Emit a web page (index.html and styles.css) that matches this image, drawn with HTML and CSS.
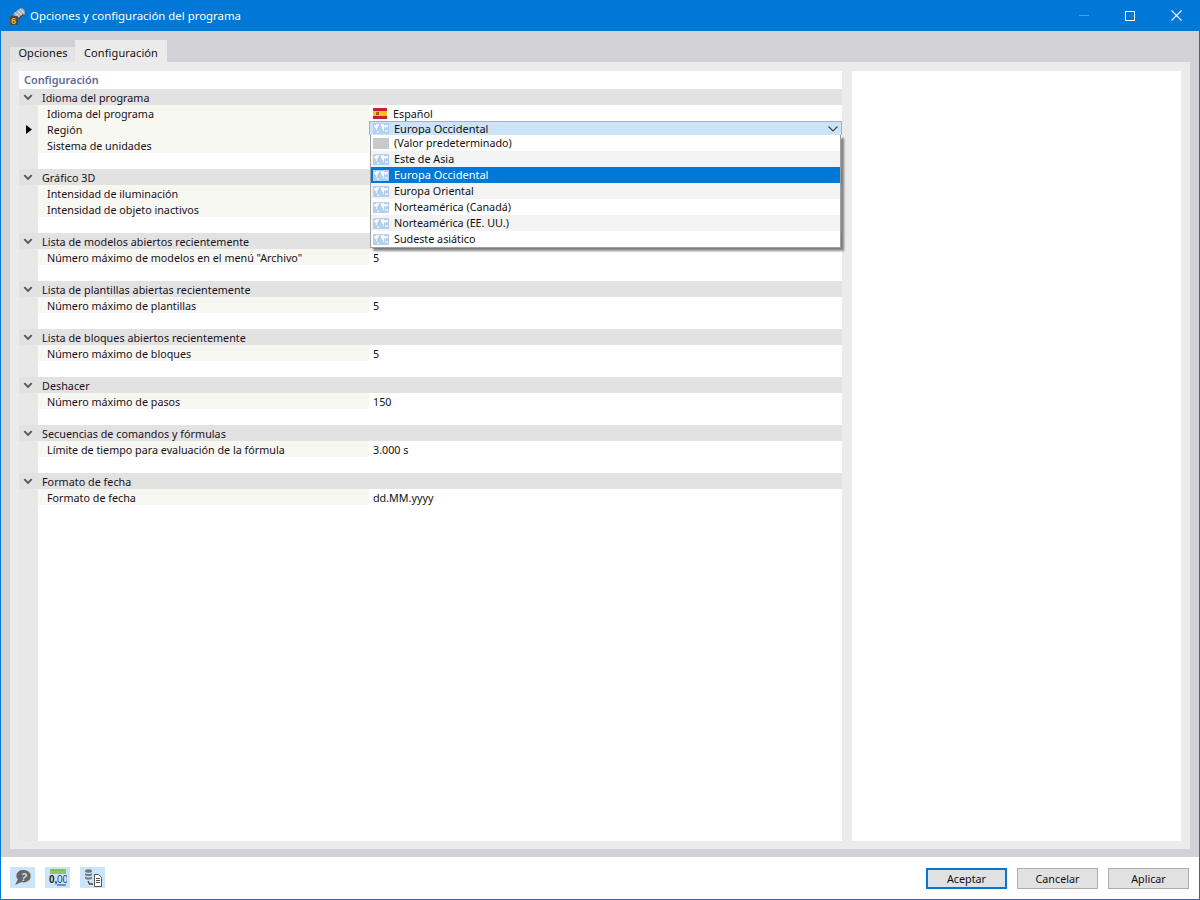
FILE: index.html
```html
<!DOCTYPE html>
<html lang="es">
<head>
<meta charset="utf-8">
<title>Opciones y configuración del programa</title>
<link rel="stylesheet" href="styles.css">
</head>
<body>
<svg class="defs" width="0" height="0">
  <symbol id="globe" viewBox="0 0 16 11">
    <rect width="16" height="11" fill="#b4d0ee"/>
    <path d="M1 2h2v-1h3v2h-1v2h-1v2h-1v-2h-1v-1h-1z" fill="#eef5fc"/>
    <path d="M8 1h3v1h4v2h-2v1h-1v-1h-1v4h-1v-2h-1v-2h-1z" fill="#f4f8fd"/>
    <path d="M4 8h2v2h-2zM12 7h3v2h-3z" fill="#dbe8f7"/>
  </symbol>
  <symbol id="chev" viewBox="0 0 12 8">
    <path d="M1.500 1.200 6 5.700l4.500-4.500" fill="none" stroke="#555" stroke-width="2.200"/>
  </symbol>
  <symbol id="thin" viewBox="0 0 10 6">
    <path d="M.5.500 5 5 9.500.500" fill="none" stroke="#444" stroke-width="1.200"/>
  </symbol>
</svg>
<div class="window">
  <header class="titlebar">
    <svg class="appicon" width="18" height="18" viewBox="0 0 18 18">
      <path d="M4 7 11 1.500c2-1 5 1 5 4 0 1-.5 2-1 2.500L9 13z" fill="#a9aeb8"/>
      <path d="M6 5.500l5 5M8.500 3.500l5 5M11 2l4 4" stroke="#e8eaee" stroke-width="1"/>
      <path d="M15 8l-6 5-1-1 6-5z" fill="#3c3f46"/>
      <rect x="1" y="9" width="8" height="9" rx="1" fill="#4a4a44"/>
      <text x="2" y="17" class="six">6</text>
    </svg>
    <span class="title">Opciones y configuración del programa</span>
    <div class="winbtns">
      <span class="wb"><i class="min"></i></span>
      <span class="wb"><i class="max"></i></span>
      <span class="wb"><svg width="11" height="11" viewBox="0 0 11 11"><path d="M.5.500l10 10M10.500.500l-10 10" stroke="#fff" stroke-width="1.100"/></svg></span>
    </div>
  </header>
  <main class="body">
    <nav class="tabs">
      <span class="tab">Opciones</span>
      <span class="tab active">Configuración</span>
    </nav>
    <div class="panel">
      <section class="main">
        <h1 class="heading">Configuración</h1>
        <div class="tree">
          <div class="group">
            <div class="ghead"><svg class="chev"><use href="#chev"/></svg>Idioma del programa</div>
            <div class="row"><span class="lab">Idioma del programa</span><span class="val flagval"><svg class="flag" width="14" height="11" viewBox="0 0 14 11"><rect width="14" height="11" fill="#c8202c"/><rect y="3" width="14" height="5" fill="#f7c514"/><rect x="3" y="4" width="3" height="3" fill="#b5562a"/></svg>Español</span></div>
            <div class="row sel"><svg class="marker" width="6" height="9" viewBox="0 0 6 9"><path d="M0 0l6 4.500L0 9z" fill="#000"/></svg><span class="lab">Región</span><span class="val combo"><svg class="gl"><use href="#globe"/></svg>Europa Occidental<svg class="cchev"><use href="#thin"/></svg></span>
              <ul class="drop">
                <li><i class="gray"></i>(Valor predeterminado)</li>
                <li class="alt"><svg class="gl"><use href="#globe"/></svg>Este de Asia</li>
                <li class="on"><svg class="gl"><use href="#globe"/></svg>Europa Occidental</li>
                <li class="alt"><svg class="gl"><use href="#globe"/></svg>Europa Oriental</li>
                <li><svg class="gl"><use href="#globe"/></svg>Norteamérica (Canadá)</li>
                <li class="alt"><svg class="gl"><use href="#globe"/></svg>Norteamérica (EE. UU.)</li>
                <li><svg class="gl"><use href="#globe"/></svg>Sudeste asiático</li>
              </ul>
            </div>
            <div class="row"><span class="lab">Sistema de unidades</span><span class="val"></span></div>
          </div>
          <div class="group">
            <div class="ghead"><svg class="chev"><use href="#chev"/></svg>Gráfico 3D</div>
            <div class="row"><span class="lab">Intensidad de iluminación</span><span class="val"></span></div>
            <div class="row"><span class="lab">Intensidad de objeto inactivos</span><span class="val"></span></div>
          </div>
          <div class="group">
            <div class="ghead"><svg class="chev"><use href="#chev"/></svg>Lista de modelos abiertos recientemente</div>
            <div class="row"><span class="lab">Número máximo de modelos en el menú "Archivo"</span><span class="val">5</span></div>
          </div>
          <div class="group">
            <div class="ghead"><svg class="chev"><use href="#chev"/></svg>Lista de plantillas abiertas recientemente</div>
            <div class="row"><span class="lab">Número máximo de plantillas</span><span class="val">5</span></div>
          </div>
          <div class="group">
            <div class="ghead"><svg class="chev"><use href="#chev"/></svg>Lista de bloques abiertos recientemente</div>
            <div class="row"><span class="lab">Número máximo de bloques</span><span class="val">5</span></div>
          </div>
          <div class="group">
            <div class="ghead"><svg class="chev"><use href="#chev"/></svg>Deshacer</div>
            <div class="row"><span class="lab">Número máximo de pasos</span><span class="val">150</span></div>
          </div>
          <div class="group">
            <div class="ghead"><svg class="chev"><use href="#chev"/></svg>Secuencias de comandos y fórmulas</div>
            <div class="row"><span class="lab">Límite de tiempo para evaluación de la fórmula</span><span class="val">3.000 s</span></div>
          </div>
          <div class="group">
            <div class="ghead"><svg class="chev"><use href="#chev"/></svg>Formato de fecha</div>
            <div class="row"><span class="lab">Formato de fecha</span><span class="val">dd.MM.yyyy</span></div>
          </div>
        </div>
      </section>
      <aside class="side"></aside>
    </div>
  </main>
  <footer class="footer">
    <div class="tools">
      <span class="tool"><svg width="16" height="15" viewBox="0 0 16 15"><path d="M9 0a6.500 6 0 0 1 0 12.400 7 7 0 0 1-2.500-.4L0 15l2.800-5.400A6.500 6 0 0 1 9 0z" fill="#666"/><text x="9" y="10.500" class="q">?</text></svg></span>
      <span class="tool"><svg width="18" height="17" viewBox="0 0 18 17"><rect x="1" y="0" width="16" height="5" fill="#8fc860"/><path d="M4 0v2M7 0v2M10 0v2M13 0v2" stroke="#6aa83f"/><text x="0" y="14" class="num">0,</text><text x="8" y="14" class="num blue">00</text><path d="M8 16h9" stroke="#1f3f8f"/></svg></span>
      <span class="tool"><svg width="18" height="18" viewBox="0 0 18 18"><ellipse cx="4.500" cy="2" rx="3.500" ry="1.800" fill="#777"/><path d="M1 3.500c0 2 7 2 7 0v2c0 2-7 2-7 0zM1 7c0 2 7 2 7 0v2c0 2-7 2-7 0z" fill="#777"/><path d="M4 12l1.500 3H9" fill="none" stroke="#444" stroke-width="1.300"/><path d="M10.500 5.500h4l3 3v9h-7z" fill="#fff" stroke="#555"/><path d="M12 9.500h4M12 11.500h4M12 13.500h4" stroke="#555"/></svg></span>
    </div>
    <div class="btns">
      <button class="btn default">Aceptar</button>
      <button class="btn">Cancelar</button>
      <button class="btn">Aplicar</button>
    </div>
  </footer>
</div>
</body>
</html>
```
FILE: styles.css
```css
* { box-sizing: border-box; }
html, body { margin: 0; padding: 0; }
body { width: 1200px; height: 900px; overflow: hidden; font-family: "Noto Sans", sans-serif; font-size: 10.75px; color: #111; }
.defs { position: absolute; }
.window { width: 1200px; height: 900px; display: flex; flex-direction: column; border: 1px solid #0078d7; border-top: 0; background: #fff; }
.titlebar { height: 31px; background: #0078d7; color: #fff; display: flex; align-items: center; padding-left: 8px; flex: none; }
.appicon { margin-right: 3px; }
.six { font: bold 9px "Liberation Sans", sans-serif; fill: #f0b429; }
.title { font-size: 11.4px; }
.winbtns { margin-left: auto; display: flex; }
.wb { width: 46px; height: 31px; display: flex; align-items: center; justify-content: center; }
.wb .min { width: 10px; height: 1px; background: #4da1e3; }
.wb .max { width: 10px; height: 10px; border: 1px solid #fff; }
.body { background: #d2d1d6; display: flex; flex-direction: column; flex: none; height: 826px; padding: 9px 9px 8px; }
.tabs { display: flex; align-items: flex-end; height: 22px; flex: none; }
.tab { height: 15px; width: 65px; line-height: 12px; text-align: center; background: #e3e3e3; font-size: 11px; letter-spacing: .1px; padding-left: 1px; }
.tab.active { height: 22px; width: 92px; line-height: 25px; background: #ebebeb; padding-left: 0; }
.panel { width: 1180px; height: 787px; background: #ebebeb; padding: 9px 9px 8px; display: flex; gap: 10px; flex: none; }
.main { width: 823px; background: #fff; display: flex; flex-direction: column; }
.side { width: 329px; background: #fff; }
.heading { margin: 0; height: 18px; line-height: 18px; font-size: 10.9px; font-weight: 600; color: #5a6b9c; padding-left: 5px; flex: none; }
.tree { flex: 1; background: linear-gradient(to right, #e8e8e8 19px, #fff 19px); }
.group { padding-bottom: 16px; }
.group:last-child { padding-bottom: 0; }
.ghead { height: 16px; line-height: 18px; background: #e2e2e2; padding-left: 23px; position: relative; color: #1a1020; letter-spacing: .03px; }
.chev { position: absolute; left: 4px; top: 5px; width: 10px; height: 7px; }
.row { height: 16px; line-height: 18px; display: flex; position: relative; }
.lab { width: 331px; margin-left: 19px; background: #f8f8f2; padding-left: 9px; white-space: nowrap; color: #1a1020; }
.val { flex: 1; padding-left: 4px; display: flex; align-items: flex-start; }
.flagval .flag { margin-right: 6px; align-self: center; }
.marker { position: absolute; left: 7px; top: 4px; }
.combo { background: #cce4f7; border: 1px solid #a9a9e0; border-bottom-width: 0; padding-left: 3px; position: relative; z-index: 2; height: 14px; line-height: 14px; font-size: 11px; }
.gl { width: 16px; height: 11px; margin-right: 5px; flex: none; align-self: center; }
.cchev { width: 10px; height: 6px; margin-left: auto; margin-right: 3px; align-self: center; }
.drop { position: absolute; left: 351px; top: 14px; width: 471px; height: 113px; margin: 0; padding: 0; list-style: none; background: #fff; border: 1px solid #a0a0a0; border-top: 0; box-shadow: 3px 3px 2px rgba(0,0,0,.45); z-index: 3; }
.drop li { height: 16px; line-height: 16px; padding-left: 2px; display: flex; align-items: center; }
.drop li.alt { background: #f3f3f3; }
.drop li.on { background: #0078d7; color: #fff; font-size: 11px; }
.drop .gray { width: 16px; height: 11px; background: #c9c9c9; margin-right: 5px; }
.footer { height: 42px; flex: none; display: flex; justify-content: space-between; padding: 10px 9px 0 9px; }
.tools { display: flex; gap: 10px; }
.tool { width: 25px; height: 21px; background: #cce4f7; display: flex; align-items: center; justify-content: center; }
.q { font: bold italic 10px "Liberation Sans", sans-serif; fill: #cce4f7; text-anchor: middle; }
.num { font: bold 10px "Liberation Sans", sans-serif; fill: #222; }
.num.blue { fill: #1f3f8f; font-weight: normal; }
.btns { display: flex; gap: 10px; padding-top: 1px; padding-right: 1px; }
.btn { width: 81px; height: 21px; background: #e1e1e1; border: 1px solid #adadad; font: 10.75px "Noto Sans", sans-serif; color: #111; padding: 0; }
.btn.default { border: 2px solid #0078d7; }
```
